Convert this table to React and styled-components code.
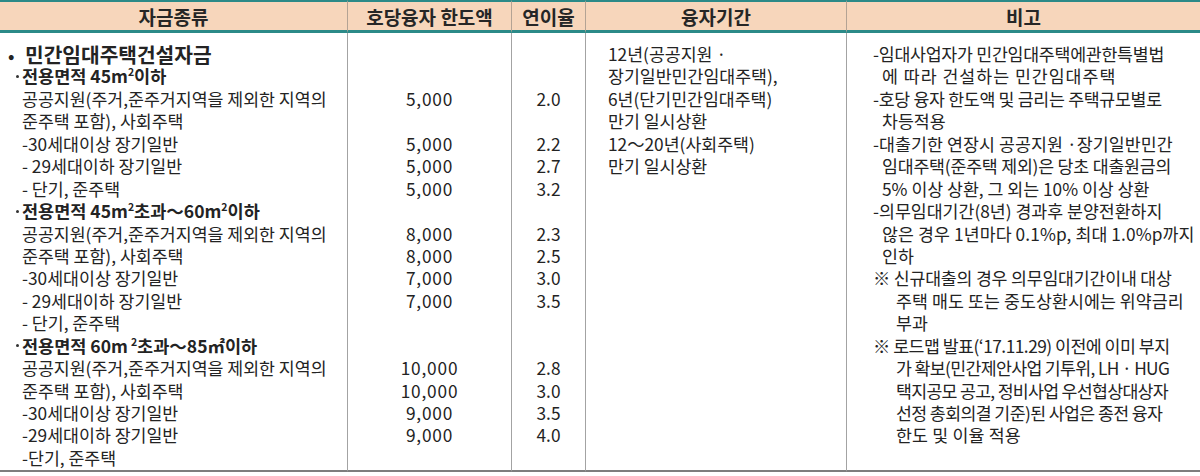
import React from 'react';
import styled, { createGlobalStyle } from 'styled-components';

const GlobalStyle = createGlobalStyle`
    body {
        margin: 0;
        background: #fff;
        font-family: "Noto Sans CJK KR", "Noto Sans", sans-serif;
        color: #232323;
    }
`;

const TEAL = '#2b8a88';

const Table = styled.div`
    display: grid;
    grid-template-columns: 347px 164px 74px 261px 354px;
    width: 1200px;
`

const HeadCell = styled.div`
    display: flex;
    align-items: center;
    justify-content: center;
    height: 28px;
    background: #f7d6bb;
    border-top: 2px solid ${TEAL};
    border-bottom: 3px solid ${TEAL};
    border-left: ${p => p.$first ? 'none' : '1px solid #b4a394'};
    font-size: 19px;
    font-weight: 700;
    color: #262626;
`

const BodyCell = styled.div`
    display: flex;
    flex-direction: column;
    align-items: ${p => p.$center ? 'center' : 'stretch'};
    padding: 10px 0 0;
    height: 427px;
    border-left: ${p => p.$first ? 'none' : '1.5px solid #a3a3a3'};
    border-bottom: 2px solid #7d7d7d;
    letter-spacing: ${p => p.$num ? '0.8px' : '0'};
`

const Line = styled.div`
    height: 22.45px;
    line-height: 22.45px;
    padding-left: ${p => p.$pad || 0}px;
    font-size: 17.3px;
    white-space: pre;
`

const Title = styled(Line)`
    padding-left: 8px;
    font-size: 20.3px;
    font-weight: 700;
`

const Bullet = styled.span`
    display: inline-block;
    width: 17px;
    font-size: 17px;
`

const SubHead = styled(Line)`
    display: flex;
    align-items: center;
    padding-left: 16px;
    font-size: 17.5px;
    font-weight: 700;
`

const Dot = styled.span`
    flex: none;
    width: 3px;
    height: 3px;
    margin-right: 3px;
    border-radius: 50%;
    background: #333;
`

const Sup = styled.sup`
    font-size: 10.5px;
    line-height: 0;
    vertical-align: 7px;
    margin-left: ${p => p.$gap ? '3px' : '0'};
`

const cols = ['자금종류', '호당융자 한도액', '연이율', '융자기간', '비고'];

const fundLines = [
    { kind: 'title', text: '민간임대주택건설자금' },
    { kind: 'sub', text: <>전용면적 45m<Sup>2</Sup>이하</> },
    { text: '공공지원(주거,준주거지역을 제외한 지역의' },
    { text: '준주택 포함), 사회주택' },
    { text: '-30세대이상 장기일반' },
    { text: '- 29세대이하 장기일반' },
    { text: '- 단기, 준주택' },
    { kind: 'sub', text: <>전용면적 45m<Sup>2</Sup>초과～60m<Sup>2</Sup>이하</> },
    { text: '공공지원(주거,준주거지역을 제외한 지역의' },
    { text: '준주택 포함), 사회주택' },
    { text: '-30세대이상 장기일반' },
    { text: '- 29세대이하 장기일반' },
    { text: '- 단기, 준주택' },
    { kind: 'sub', text: <>전용면적 60m<Sup $gap>2</Sup>초과～85㎡이하</> },
    { text: '공공지원(주거,준주거지역을 제외한 지역의' },
    { text: '준주택 포함), 사회주택' },
    { text: '-30세대이상 장기일반' },
    { text: '-29세대이하 장기일반' },
    { text: '-단기, 준주택' },
];

const limits = ['', '', '5,000', '', '5,000', '5,000', '5,000', '', '8,000', '8,000', '7,000', '7,000', '', '', '10,000', '10,000', '9,000', '9,000'];
const rates = ['', '', '2.0', '', '2.2', '2.7', '3.2', '', '2.3', '2.5', '3.0', '3.5', '', '', '2.8', '3.0', '3.5', '4.0'];

const periods = [
    '12년(공공지원 ·',
    '장기일반민간임대주택),',
    '6년(단기민간임대주택)',
    '만기 일시상환',
    '12～20년(사회주택)',
    '만기 일시상환',
];

// [text, indent, letter-spacing] — indent: 0 marker line, 1 after "-", 2 after "※"
// the original text is justified, so each wrapped line is nudged to the column edge
const notes = [
    ['-임대사업자가 민간임대주택에관한특별법', 0, -0.25],
    ['에 따라 건설하는 민간임대주택', 1, 1.0],
    ['-호당 융자 한도액 및 금리는 주택규모별로', 0, -0.3],
    ['차등적용', 1, 0],
    ['-대출기한 연장시 공공지원 ·장기일반민간', 0, 0.1],
    ['임대주택(준주택 제외)은 당초 대출원금의', 1, -0.2],
    ['5% 이상 상환, 그 외는 10% 이상 상환', 1, 0],
    ['-의무임대기간(8년) 경과후 분양전환하지', 0, 0],
    ['않은 경우 1년마다 0.1%p, 최대 1.0%p까지', 1, 0.1],
    ['인하', 1, 0],
    ['※ 신규대출의 경우 의무임대기간이내 대상', 0, -0.2],
    ['주택 매도 또는 중도상환시에는 위약금리', 2, 0.1],
    ['부과', 2, 0],
    ['※ 로드맵 발표(‘17.11.29) 이전에 이미 부지', 0, -0.5],
    ['가 확보(민간제안사업 기투위, LH · HUG', 2, -0.65],
    ['택지공모 공고, 정비사업 우선협상대상자', 2, -0.7],
    ['선정 총회의결 기준)된 사업은 종전 융자', 2, -0.6],
    ['한도 및 이율 적용', 2, 0.2],
];

const noteIndent = [26, 35, 49];

const App = () => {
    return (
        <>
        <GlobalStyle />
        <Table>
            {cols.map((c, i) => (
                <HeadCell key={c} $first={i === 0}>{c}</HeadCell>
            ))}

            <BodyCell $first>
                {fundLines.map((l, i) => {
                    if (l.kind === 'title') {
                        return <Title key={i}><Bullet>•</Bullet>{l.text}</Title>;
                    }
                    if (l.kind === 'sub') {
                        return <SubHead key={i}><Dot /><span>{l.text}</span></SubHead>;
                    }
                    return <Line key={i} $pad={22}>{l.text}</Line>;
                })}
            </BodyCell>

            <BodyCell $center $num>
                {limits.map((v, i) => <Line key={i}>{v || '\u00a0'}</Line>)}
            </BodyCell>

            <BodyCell $center>
                {rates.map((v, i) => <Line key={i}>{v || '\u00a0'}</Line>)}
            </BodyCell>

            <BodyCell>
                {periods.map((v, i) => <Line key={i} $pad={22}>{v}</Line>)}
            </BodyCell>

            <BodyCell>
                {notes.map(([t, ind, ls], i) => (
                    <Line key={i} $pad={noteIndent[ind]} style={{ letterSpacing: `${ls}px` }}>{t}</Line>
                ))}
            </BodyCell>
        </Table>
        </>
    );
};

export default App;
